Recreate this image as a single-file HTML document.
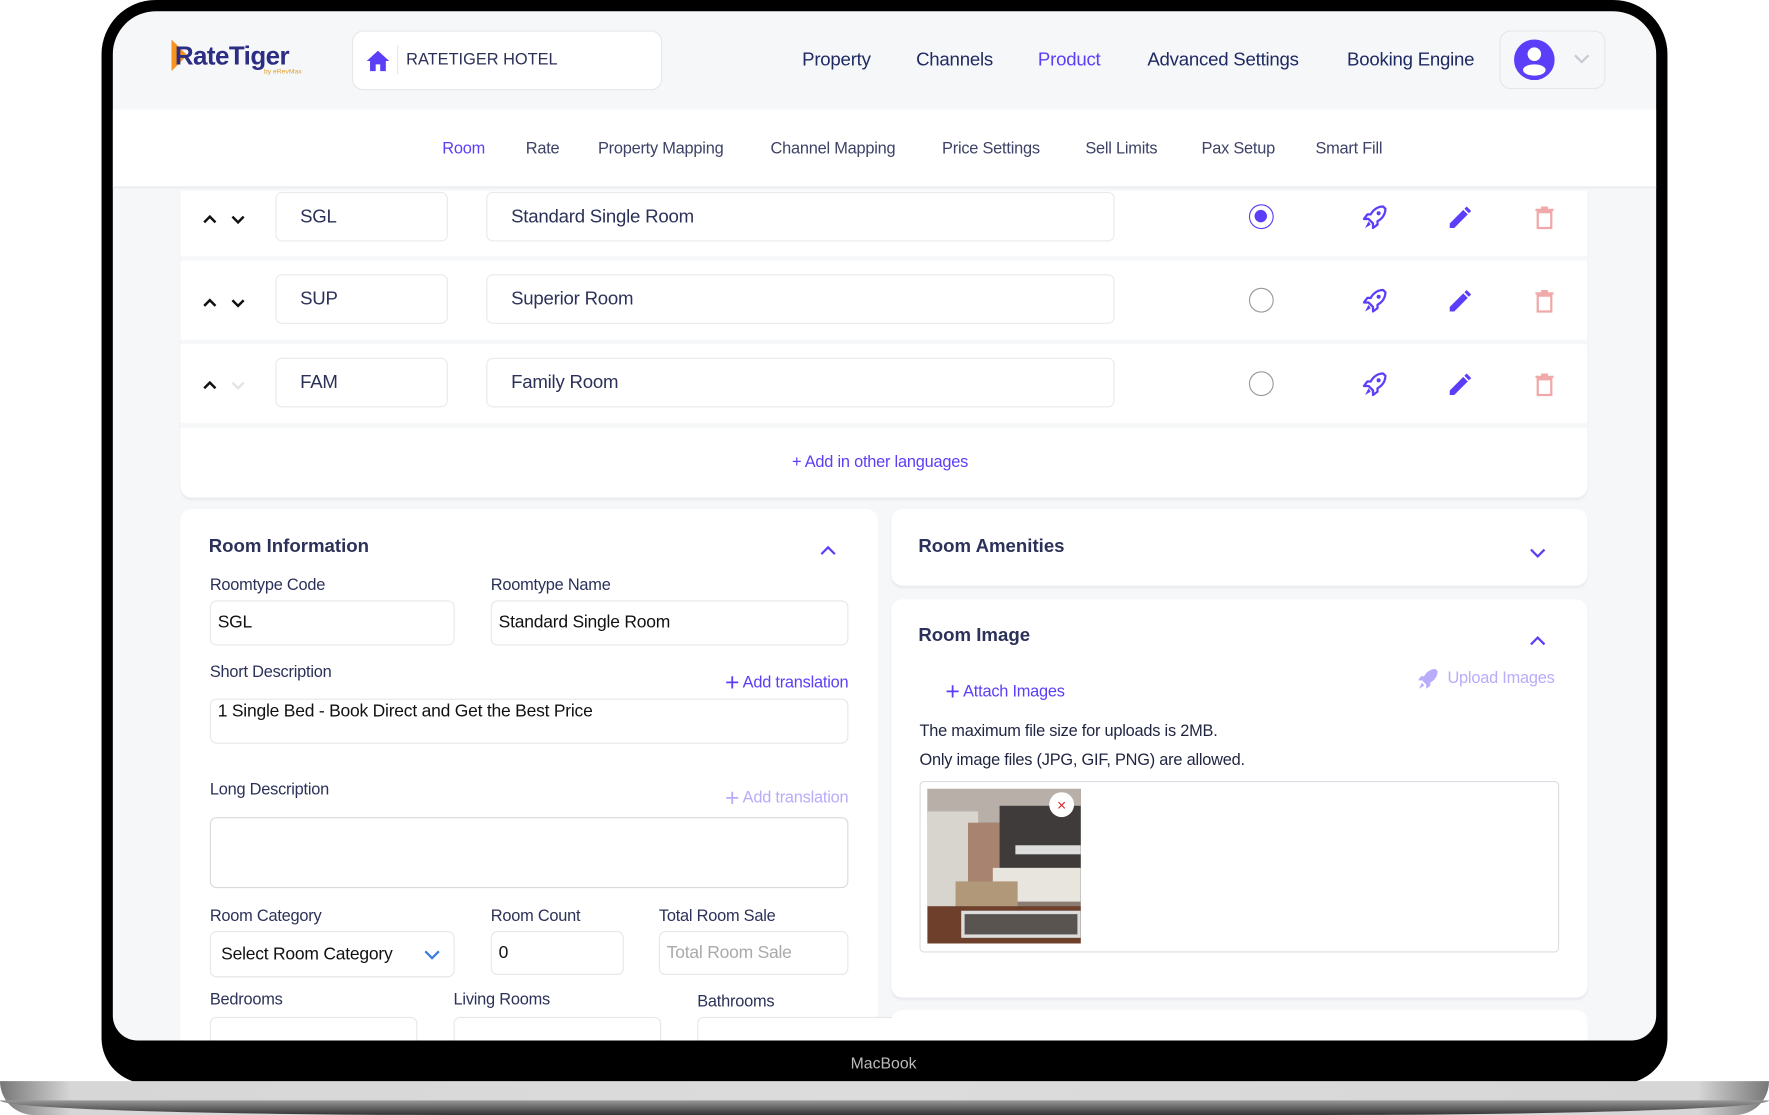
<!DOCTYPE html>
<html><head><meta charset="utf-8">
<style>
*{box-sizing:border-box;margin:0;padding:0}
html,body{width:1769px;height:1115px;overflow:hidden;background:#fff;font-family:"Liberation Sans",sans-serif;color:#2b3158}
#w{position:absolute;left:0;top:0;width:1568px;height:988px;transform:scale(1.12819,1.12854);transform-origin:0 0}
.a{position:absolute}
.bezel{left:90px;top:0;width:1388px;height:960px;background:#000;border-radius:48px 48px 40px 40px}
.screen{left:100px;top:10px;width:1368px;height:912px;background:#f6f7f9;border-radius:38px 38px 22px 22px;overflow:hidden}
.base{left:0;top:958px;width:1568px;height:30px;background:linear-gradient(90deg,#777 0%,#d6d6d6 4%,#dcdcdc 50%,#d6d6d6 96%,#777 100%);border-radius:0 0 60px 60px}
.base2{left:0;top:975px;width:1568px;height:13px;background:linear-gradient(180deg,#999,#333);border-radius:0 0 400px 400px/0 0 13px 13px}
.card{background:#fff;border-radius:10px}
.inp{position:absolute;background:#fff;border:1px solid #e6e7ec;border-radius:6px;font-size:15.5px;color:#111;padding-left:6px;display:flex;align-items:center;letter-spacing:-0.2px}
.lbl{position:absolute;font-size:14.5px;color:#2b3158;letter-spacing:-0.2px}
.nav{position:absolute;top:34px;font-size:16.5px;color:#1f2a63;letter-spacing:-0.2px}
.sub{position:absolute;top:114px;font-size:14.5px;color:#3d4266;letter-spacing:-0.2px}
.acc{color:#5b3ff8}
.rowin{position:absolute;height:44px;border:1px solid #e8e9ee;border-radius:6px;background:#fff;font-size:16.5px;color:#2b3158;display:flex;align-items:center;padding-left:21px;letter-spacing:-0.2px}
.tr{position:absolute;right:716px;font-size:14.5px;letter-spacing:-0.2px}
</style></head><body><div id="w">
<div class="a bezel"></div>
<div class="a base"></div><div class="a base2"></div>
<div class="a" style="left:754px;top:934px;font-size:14px;color:#bbb">MacBook</div>
<div class="a screen">
 <div class="a" style="left:0;top:87px;width:1368px;height:70px;background:#fff;border-bottom:2px solid #eceef2"></div>
 <div class="a" style="left:52px;top:25px;width:0;height:0;border-top:14px solid transparent;border-bottom:14px solid transparent;border-left:14px solid #f7931e"></div>
 <div class="a" style="left:55px;top:26px;font-size:23px;font-weight:bold;color:#2c2e83;letter-spacing:-0.5px">RateTiger</div>
 <div class="a" style="left:134px;top:51px;font-size:6px;color:#e0a030">by eRevMax</div>
 <div class="a card" style="left:212px;top:17px;width:275px;height:53px;border:1px solid #e6e7ec"></div>
 <svg class="a" style="left:224px;top:34px" width="22" height="20" viewBox="0 0 22 20"><path d="M11 1 L21 10 H18 V19 H13 V13 H9 V19 H4 V10 H1 Z" fill="#5b3ff8"/></svg>
 <div class="a" style="left:252px;top:30px;width:1px;height:26px;background:#e6e7ec"></div>
 <div class="a" style="left:260px;top:35px;font-size:14.5px;color:#2b3158">RATETIGER HOTEL</div>
 <div class="nav" style="left:611px">Property</div>
 <div class="nav" style="left:712px">Channels</div>
 <div class="nav acc" style="left:820px">Product</div>
 <div class="nav" style="left:917px">Advanced Settings</div>
 <div class="nav" style="left:1094px">Booking Engine</div>
 <div class="a" style="left:1229px;top:17px;width:94px;height:52px;border:1px solid #e6e7ec;border-radius:10px"></div>
 <svg class="a" style="left:1242px;top:25px" width="36" height="36" viewBox="0 0 36 36"><circle cx="18" cy="18" r="18" fill="#5b3ff8"/><circle cx="18" cy="13" r="6" fill="#fff"/><ellipse cx="18" cy="27" rx="10" ry="5" fill="#fff"/></svg>
 <svg class="a" style="left:1295px;top:38px" width="14" height="9" viewBox="0 0 14 9"><path d="M1 1 L7 7 L13 1" stroke="#c8c9d2" stroke-width="2" fill="none"/></svg>
 <div class="sub acc" style="left:292px">Room</div>
 <div class="sub" style="left:366px">Rate</div>
 <div class="sub" style="left:430px">Property Mapping</div>
 <div class="sub" style="left:583px">Channel Mapping</div>
 <div class="sub" style="left:735px">Price Settings</div>
 <div class="sub" style="left:862px">Sell Limits</div>
 <div class="sub" style="left:965px">Pax Setup</div>
 <div class="sub" style="left:1066px">Smart Fill</div>
 <div class="a card" style="left:60px;top:159px;width:1247px;height:272px;border-radius:0 0 10px 10px;box-shadow:0 2px 2px #e8e9ee"></div>
 <div class="a" style="left:60px;top:217px;width:1247px;height:4px;background:#f6f7f9"></div>
 <div class="a" style="left:60px;top:291px;width:1247px;height:4px;background:#f6f7f9"></div>
 <div class="a" style="left:60px;top:365px;width:1247px;height:4px;background:#f6f7f9"></div>
 <svg class="a" style="left:79px;top:178px" width="40" height="12" viewBox="0 0 40 12"><path d="M2 9 L7 4 L12 9" stroke="#111" stroke-width="2.2" fill="none"/><path d="M27 4 L32 9 L37 4" stroke="#111" stroke-width="2.2" fill="none"/></svg>
 <svg class="a" style="left:79px;top:252px" width="40" height="12" viewBox="0 0 40 12"><path d="M2 9 L7 4 L12 9" stroke="#111" stroke-width="2.2" fill="none"/><path d="M27 4 L32 9 L37 4" stroke="#111" stroke-width="2.2" fill="none"/></svg>
 <svg class="a" style="left:79px;top:325px" width="40" height="12" viewBox="0 0 40 12"><path d="M2 9 L7 4 L12 9" stroke="#111" stroke-width="2.2" fill="none"/><path d="M27 4 L32 9 L37 4" stroke="#e4e4e8" stroke-width="2.2" fill="none"/></svg>
 <div class="rowin" style="left:144px;top:160px;width:153px">SGL</div>
 <div class="rowin" style="left:331px;top:160px;width:557px">Standard Single Room</div>
 <div class="rowin" style="left:144px;top:233px;width:153px">SUP</div>
 <div class="rowin" style="left:331px;top:233px;width:557px">Superior Room</div>
 <div class="rowin" style="left:144px;top:307px;width:153px">FAM</div>
 <div class="rowin" style="left:331px;top:307px;width:557px">Family Room</div>
 <div class="a" style="left:1007px;top:171px;width:22px;height:22px;border:1.5px solid #5b3ff8;border-radius:50%"><div style="margin:4px;width:11px;height:11px;border-radius:50%;background:#5b3ff8"></div></div>
 <div class="a" style="left:1007px;top:245px;width:22px;height:22px;border:1.5px solid #9a9a9a;border-radius:50%"></div>
 <div class="a" style="left:1007px;top:319px;width:22px;height:22px;border:1.5px solid #9a9a9a;border-radius:50%"></div>
 <svg width="0" height="0" style="position:absolute"><defs>
  <g id="rk"><path d="M19 2 C14 2 10 5 8 9 L5 9 L2 13 L6 13 L10 17 L10 21 L14 18 L14 15 C18 13 21 9 21 4 Z" fill="none" stroke="#5b3ff8" stroke-width="2" stroke-linejoin="round"/><circle cx="15" cy="8" r="1.8" fill="#5b3ff8"/><path d="M6 15 L3 21 L8 18 Z" fill="#5b3ff8"/></g>
  <g id="pn"><path d="M3 21 L3 17 L15 5 L19 9 L7 21 Z M16 4 L18 2 L22 6 L20 8 Z" fill="#5b3ff8"/></g>
  <g id="tr"><path d="M6 7 H18 V21 H6 Z" fill="none" stroke="#f0a8a8" stroke-width="2"/><path d="M4 5 H20 M9 3 H15" stroke="#f0a8a8" stroke-width="2"/></g>
 </defs></svg>
 <svg class="a" style="left:1107px;top:171px" width="24" height="24" viewBox="0 0 24 24"><use href="#rk"/></svg>
 <svg class="a" style="left:1107px;top:245px" width="24" height="24" viewBox="0 0 24 24"><use href="#rk"/></svg>
 <svg class="a" style="left:1107px;top:319px" width="24" height="24" viewBox="0 0 24 24"><use href="#rk"/></svg>
 <svg class="a" style="left:1182px;top:171px" width="24" height="24" viewBox="0 0 24 24"><use href="#pn"/></svg>
 <svg class="a" style="left:1182px;top:245px" width="24" height="24" viewBox="0 0 24 24"><use href="#pn"/></svg>
 <svg class="a" style="left:1182px;top:319px" width="24" height="24" viewBox="0 0 24 24"><use href="#pn"/></svg>
 <svg class="a" style="left:1257px;top:171px" width="24" height="24" viewBox="0 0 24 24"><use href="#tr"/></svg>
 <svg class="a" style="left:1257px;top:245px" width="24" height="24" viewBox="0 0 24 24"><use href="#tr"/></svg>
 <svg class="a" style="left:1257px;top:319px" width="24" height="24" viewBox="0 0 24 24"><use href="#tr"/></svg>
 <div class="a acc" style="left:602px;top:392px;font-size:14.5px;letter-spacing:-0.2px">+ Add in other languages</div>
 <div class="a card" style="left:60px;top:441px;width:618px;height:500px"></div>
 <div class="a" style="left:85px;top:465px;font-size:16.5px;font-weight:bold;color:#2b3158">Room Information</div>
 <svg class="a" style="left:627px;top:473px" width="14" height="9" viewBox="0 0 14 9"><path d="M1 8 L7 2 L13 8" stroke="#5b3ff8" stroke-width="2" fill="none"/></svg>
 <div class="lbl" style="left:86px;top:501px">Roomtype Code</div>
 <div class="lbl" style="left:335px;top:501px">Roomtype Name</div>
 <div class="inp" style="left:86px;top:522px;width:217px;height:40px">SGL</div>
 <div class="inp" style="left:335px;top:522px;width:317px;height:40px">Standard Single Room</div>
 <div class="lbl" style="left:86px;top:578px">Short Description</div>
 <div class="tr acc" style="top:582px"><span style="font-size:22px;vertical-align:-3px">+</span> Add translation</div>
 <div class="inp" style="left:86px;top:609px;width:566px;height:40px;align-items:flex-start;padding-top:2px">1 Single Bed - Book Direct and Get the Best Price</div>
 <div class="lbl" style="left:86px;top:682px">Long Description</div>
 <div class="tr" style="top:684px;color:#b8acfb"><span style="font-size:22px;vertical-align:-3px">+</span> Add translation</div>
 <div class="inp" style="left:86px;top:714px;width:566px;height:63px;border:1.5px solid #d8d9de"></div>
 <div class="lbl" style="left:86px;top:794px">Room Category</div>
 <div class="lbl" style="left:335px;top:794px">Room Count</div>
 <div class="lbl" style="left:484px;top:794px">Total Room Sale</div>
 <div class="inp" style="left:86px;top:815px;width:217px;height:41px;padding-left:9px">Select Room Category</div>
 <svg class="a" style="left:276px;top:832px" width="14" height="9" viewBox="0 0 14 9"><path d="M1 1 L7 7 L13 1" stroke="#3b7dd8" stroke-width="2" fill="none"/></svg>
 <div class="inp" style="left:335px;top:815px;width:118px;height:39px">0</div>
 <div class="inp" style="left:484px;top:815px;width:168px;height:39px;color:#aaa">Total Room Sale</div>
 <div class="lbl" style="left:86px;top:868px">Bedrooms</div>
 <div class="lbl" style="left:302px;top:868px">Living Rooms</div>
 <div class="lbl" style="left:518px;top:870px">Bathrooms</div>
 <div class="inp" style="left:86px;top:891px;width:184px;height:40px"></div>
 <div class="inp" style="left:302px;top:891px;width:184px;height:40px"></div>
 <div class="inp" style="left:518px;top:891px;width:184px;height:40px"></div>
 <div class="a card" style="left:690px;top:441px;width:617px;height:68px;box-shadow:0 2px 2px #e8e9ee"></div>
 <div class="a" style="left:714px;top:465px;font-size:16.5px;font-weight:bold">Room Amenities</div>
 <svg class="a" style="left:1256px;top:476px" width="14" height="9" viewBox="0 0 14 9"><path d="M1 1 L7 7 L13 1" stroke="#5b3ff8" stroke-width="2" fill="none"/></svg>
 <div class="a card" style="left:690px;top:521px;width:617px;height:353px;box-shadow:0 2px 2px #e8e9ee"></div>
 <div class="a" style="left:714px;top:544px;font-size:16.5px;font-weight:bold">Room Image</div>
 <svg class="a" style="left:1256px;top:553px" width="14" height="9" viewBox="0 0 14 9"><path d="M1 8 L7 2 L13 8" stroke="#5b3ff8" stroke-width="2" fill="none"/></svg>
 <div class="a acc" style="left:738px;top:590px;font-size:14.5px;letter-spacing:-0.2px"><span style="font-size:22px;vertical-align:-3px">+</span> Attach Images</div>
 <svg class="a" style="left:1155px;top:581px" width="22" height="22" viewBox="0 0 24 24"><path d="M19 2 C14 2 10 5 8 9 L5 9 L2 13 L6 13 L10 17 L10 21 L14 18 L14 15 C18 13 21 9 21 4 Z" fill="#b8acfb"/><path d="M6 15 L3 21 L8 18 Z" fill="#b8acfb"/></svg>
 <div class="a" style="left:1183px;top:583px;font-size:14.5px;color:#b8acfb;letter-spacing:-0.2px">Upload Images</div>
 <div class="a" style="left:715px;top:630px;font-size:14.5px;color:#1f2440;letter-spacing:-0.2px">The maximum file size for uploads is 2MB.</div>
 <div class="a" style="left:715px;top:656px;font-size:14.5px;color:#1f2440;letter-spacing:-0.2px">Only image files (JPG, GIF, PNG) are allowed.</div>
 <div class="a" style="left:715px;top:682px;width:567px;height:152px;border:1.5px solid #dcdde2;border-radius:4px"></div>
 <div class="a" style="left:722px;top:689px;width:136px;height:137px;overflow:hidden;background:#8a7c70">
  <div class="a" style="left:0;top:0;width:136px;height:30px;background:#b8b0a8"></div>
  <div class="a" style="left:0;top:20px;width:45px;height:90px;background:#d8d4ce"></div>
  <div class="a" style="left:36px;top:30px;width:28px;height:80px;background:#a88470"></div>
  <div class="a" style="left:64px;top:15px;width:72px;height:85px;background:#3e3b3a"></div>
  <div class="a" style="left:78px;top:50px;width:58px;height:8px;background:#ddd"></div>
  <div class="a" style="left:58px;top:70px;width:78px;height:30px;background:#e8e4de"></div>
  <div class="a" style="left:25px;top:82px;width:55px;height:30px;background:#b09878"></div>
  <div class="a" style="left:0;top:104px;width:136px;height:33px;background:#6e402c"></div>
  <div class="a" style="left:30px;top:108px;width:106px;height:24px;background:#5a5450;border:3px solid #ddd"></div>
  <div class="a" style="left:108px;top:3px;width:22px;height:22px;border-radius:50%;background:#fff;color:#d22;font-size:14px;text-align:center;line-height:22px">×</div>
 </div>
 <div class="a card" style="left:690px;top:885px;width:617px;height:60px"></div>
</div>
</div></body></html>
